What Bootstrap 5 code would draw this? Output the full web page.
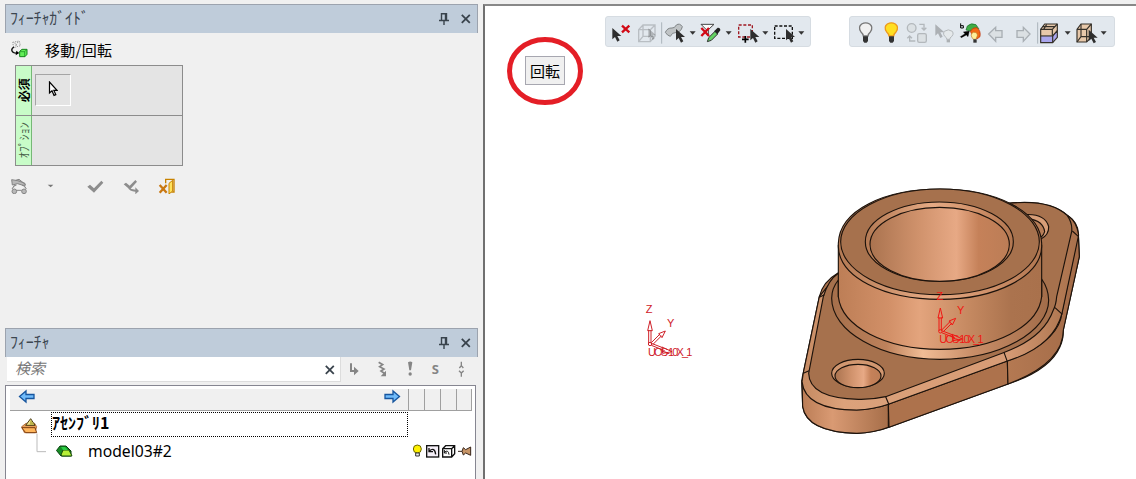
<!DOCTYPE html>
<html lang="ja">
<head>
<meta charset="utf-8">
<title>フィーチャガイド</title>
<link href="https://cdn.jsdelivr.net/npm/bootstrap@5.3.0/dist/css/bootstrap.min.css" rel="stylesheet">
<style>
body{width:1136px;height:479px;overflow:hidden;background:#f0f0f0;font-family:"Noto Sans","Noto Sans CJK JP",sans-serif;font-size:15px;line-height:1.2;color:#000}
.jp{font-family:"Noto Sans CJK JP",sans-serif}
svg{display:block;flex:none}
.side{width:483px;padding:4px 5px 0 5px}
.titlebar{width:473px;height:29px;background:#bfccda;border:1px solid #9ca3ae;border-bottom:0;font-size:16px;color:#3c4650;padding-left:4px;flex:none}
.titlebar span{margin-top:-3px;letter-spacing:-.15px}
.guide{height:295px;flex:none}
.guide-name{height:32px;padding:2px 0 0 5px}
.slots{width:168px;height:101px;margin-left:10px;border:1px solid #8c8c8c;background:#e4e4e4}
.slot{height:49px}
.slot+.slot{height:50px;border-top:1px solid #8c8c8c}
.slot-tag{width:16px;background:#c8fcc8;border-right:1px solid #76b876;flex:none}
.slot-tag span{transform:rotate(-90deg);white-space:nowrap;font-size:12px}
.pick{width:36px;height:32px;margin:8px 0 0 3px;border:1px solid #a5a5a5;border-right-color:#fff;border-bottom-color:#fff}
.search{width:334px;height:25px;background:#fff;padding:0 10px 3px 8px;margin-left:2px;color:#777;flex:none;border-right:1px solid #ddd;border-bottom:1px solid #ddd}
.tree{width:471px;height:94px;margin-top:3px;background:#fff;border:1px solid #868691;border-bottom:0;padding:3px 3px 0 4px}
.tree-head{height:22px;background:#f0f0f0;border-bottom:1px solid #a0a0a0}
.tree-head i{width:16px;border-left:1px solid #a0a0a0}
.tree-head i:last-child{border-right:1px solid #a0a0a0}
.node-name{width:357px;height:25px;border:1px dotted #000;font-size:16px;font-weight:bold;line-height:19px}
.view{margin-top:4px;height:475px;background:#fff;border-left:2px solid #707070;border-top:2px solid #888}
.tools{top:10px;height:31px;background:#e2e8ee;border:1px solid #d6dce2;border-radius:3px}
.hint{left:40px;top:50px;width:40px;height:29px;background:#f0f0f0;border:1px solid #a7a7b0}
</style>
</head>
<body class="d-flex">
<svg width="0" height="0" class="position-absolute"><defs>
<g id="pin" fill="none" stroke="#39434c" stroke-width="1.4"><path d="M2.500 7V.8h5V7M0 7.500h10M5 7.500V12M6.500 1v6"/></g>
<path id="x" d="M.8.8l8 8M8.800.8l-8 8" fill="none" stroke="#39434c" stroke-width="1.8"/>
<path id="caret" d="M0 0h18l-9 10z" fill="#333"/>
<path id="cur" d="M0 0V34l8-7 7 14 7-4-7-13h12z" fill="#2e2e2e"/>
<g id="axis" fill="none" stroke-width="3"><path d="M56 160V120M63 160V120M53 122l7-30 7 30zM64 158l26-26M69 163l26-26M86 131l20-8-10 20zM64 166l40 16M64 160l34 13M96 171l30 14-28 5z"/><circle cx="60" cy="162" r="5"/></g>
</defs></svg>

<aside class="side d-flex flex-column flex-shrink-0">
 <header class="titlebar jp d-flex align-items-center"><span class="me-auto">ﾌｨｰﾁｬｶﾞｲﾄﾞ</span>
  <svg width="10" height="13" style="margin-right:12px"><use href="#pin"/></svg><svg width="10" height="10" style="margin-right:6px"><use href="#x"/></svg></header>
 <section class="guide">
  <div class="guide-name jp d-flex align-items-center">
   <svg width="20" height="20" viewBox="30 120 60 60"><path d="M38 127l20-4 3 14-20 6zM44 128l6 12M54 126l-8 12" fill="none" stroke="#999" stroke-width="3" stroke-dasharray="4 3"/><path d="M42 141q-9 5-6 12t18 7" fill="none" stroke="#111" stroke-width="4"/><path d="M49 152l9 7-11 7z"/><path d="M59 154l7-6h15v15l-6 7H59z" fill="#62ef58" stroke="#15831c" stroke-width="3"/><path d="M60 155h14v14M74 155l6-6" fill="none" stroke="#15831c" stroke-width="2"/></svg>
   <span style="margin-left:15px;letter-spacing:.3px">移動/回転</span></div>
  <div class="slots">
   <div class="slot d-flex"><div class="slot-tag jp fw-bold d-flex align-items-center justify-content-center"><span>必須</span></div>
    <div class="pick d-flex"><svg width="10" height="16" style="margin:6px 0 0 12px" viewBox="0 0 10 16"><path d="M1.500 1v11l2.500-2.200 2 4.600 1.800-.8-2-4.300h3.200z" fill="#fff" stroke="#000" stroke-width="1.200"/></svg></div></div>
   <div class="slot d-flex"><div class="slot-tag jp d-flex align-items-center justify-content-center"><span style="color:#496149">ｵﾌﾟｼｮﾝ</span></div></div>
  </div>
  <svg width="180" height="20" viewBox="15 520 540 60" style="margin:8px 0 0 0">
   <g fill="#b8b8b8" stroke="#858585" stroke-width="3"><path d="M35 537l18 3 22 8v8l-22-7-16 4zM47 539l10-3 20 16"/><circle cx="43" cy="572" r="7"/><circle cx="72" cy="572" r="7"/><path d="M36 565l7-11h6M79 565l-7-11h-6M50 569h15"/></g>
   <path d="M143 552h17l-8 8z" fill="#777"/><path d="M262 558l8-6 12 11 22-23 6 6-28 30z" fill="#8d8d8d"/>
   <path d="M371 551l7-5 11 9 17-17 5 5-19 21 14 3v-7l11 11-11 10v-8q-18-2-22-11z" fill="#8d8d8d"/>
   <path d="M497 548v-12h25v38h-8" fill="none" stroke="#c88200" stroke-width="4"/><path d="M507 548l11-9v32l-11 9z" fill="#ffe25b" stroke="#c88200" stroke-width="3"/><path d="M479 553l21 23M500 553l-21 23" stroke="#c97812" stroke-width="7"/>
  </svg>
 </section>
 <header class="titlebar jp d-flex align-items-center"><span class="me-auto">ﾌｨｰﾁｬ</span>
  <svg width="10" height="13" style="margin-right:12px"><use href="#pin"/></svg><svg width="10" height="10" style="margin-right:6px"><use href="#x"/></svg></header>
 <div class="d-flex">
  <div class="search jp d-flex align-items-center"><em class="me-auto">検索</em><svg width="10" height="10" class="mt-1" style="margin-right:-5px"><use href="#x"/></svg></div>
  <svg width="129" height="25" viewBox="303 113 387 75"><g fill="none" stroke="#858585" stroke-width="6"><path d="M333 132v23h14"/><path d="M416 129l12 7-9 6 13 7-9 6 13 9" stroke-width="5"/></g><path d="M342 142l14 13-14 13zM422 171h16v-17zM504 129q7-5 13 0l-4 24h-5z" fill="#858585"/><circle cx="510.500" cy="164" r="5" fill="#858585"/><text x="575" y="164" font-family="Noto Sans" font-weight="bold" font-size="39" fill="#858585">S</text><path d="M664 127v12l-6 7M664 139l6 7M657 154l7 7 7-7M664 160v12" stroke="#858585" stroke-width="4" fill="none"/></svg>
 </div>
 <div class="tree flex-shrink-0">
  <div class="tree-head d-flex">
   <svg width="18" height="15" viewBox="0 0 18 15" style="margin-left:8px"><path d="M1.500 7.500L8 2v3.500h8v4H8V13z" fill="#70bbfa" stroke="#16559e" stroke-width="1.300"/></svg>
   <svg width="18" height="15" viewBox="0 0 18 15" class="ms-auto" style="margin-right:7px"><path d="M16.500 7.500L10 2v3.500H2v4h8V13z" fill="#70bbfa" stroke="#16559e" stroke-width="1.300"/></svg>
   <i></i><i></i><i></i><i></i>
  </div>
  <div class="d-flex" style="padding-top:1px">
   <svg width="41" height="68" viewBox="30 275 123 204" style="margin-right:0"><path d="M111 340v54h27" fill="none" stroke="#bbb" stroke-width="3"/><path d="M65 319l13-10h26l6 10-5 18H73z" fill="#e9a05a" stroke="#934713" stroke-width="2"/><path d="M65 322h40l5 15H77z" fill="#ffb65c" stroke="#7c3d10" stroke-width="3"/><path d="M92 295l13 20H77z" fill="#f0e58d" stroke="#493a14" stroke-width="3"/><path d="M92 298l-3 15h14z" fill="#bcb448"/></svg>
   <div class="flex-grow-1">
    <div class="node-name jp">ｱｾﾝﾌﾞﾘ1</div>
    <div class="d-flex align-items-center" style="height:28px;padding-left:5px">
     <svg width="17" height="12" viewBox="0 0 17 12"><path d="M.5 5.500L4 1h6l5 5v5H5z" fill="#168b25" stroke="#063f0d"/><path d="M5 10l2-5h6l3 6H6z" fill="#b7ef38" stroke="#174d0c"/><path d="M5 2h4l3 3H7z" fill="#2bce43"/></svg>
     <span class="me-auto" style="margin-left:15px;font-size:15.700px">model03#2</span>
     <svg width="62" height="16" viewBox="510 370 186 48" style="margin-right:0"><circle cx="532" cy="388" r="12" fill="#fff100" stroke="#6e6800" stroke-width="3"/><path d="M527 400h11v9h-11z" fill="#eee" stroke="#333" stroke-width="3"/><rect x="560" y="378" width="36" height="34" fill="#f5eff8" stroke="#111" stroke-width="4"/><path d="M568 394q16-13 19 10M567 385v11h12M608 387l9-9h27v24l-9 10h-27zM608 387h27v25M635 387l9-9" fill="none" stroke="#111" stroke-width="4"/><path d="M613 398q12-10 14 7M613 391v9h8" fill="none" stroke="#111" stroke-width="3"/><path d="M654 395h12l4-11 7 6 15-8v25l-15-7-7 6-4-11" fill="#c79567" stroke="#362419" stroke-width="3"/></svg>
    </div>
   </div>
  </div>
 </div>
</aside>

<main class="view flex-grow-1 position-relative">
 <svg class="position-absolute" style="left:22px;top:28px" width="80" height="74" viewBox="0 0 80 74"><ellipse cx="38" cy="37" rx="35.500" ry="31.500" fill="none" stroke="#e41e26" stroke-width="5"/></svg>
 <div class="hint jp position-absolute d-flex align-items-center justify-content-center">回転</div>

 <div class="tools position-absolute d-flex align-items-center" style="left:120px;width:206px">
  <svg width="204" height="29" viewBox="18 21 612 87">
   <use href="#cur" transform="translate(37 54)"/><path d="M66 47l22 20M88 47l-22 20" stroke="#d20a16" stroke-width="7"/>
   <g fill="none" stroke="#b9bec3" stroke-width="4"><path d="M116 59l13-14h36v34l-14 16h-35zM116 59h35v36M151 59l14-14M129 45v34h36M129 79l-13 16"/></g><use href="#cur" transform="translate(145 55) scale(.85)" opacity=".28"/>
   <path d="M185 37v64" stroke="#aab3bb" stroke-width="3"/>
   <path d="M196 67q6-14 20-13 8 1 13-9 10-7 18 5-4 16-17 17-15 0-19 12-9-2-15-12z" fill="#bfc3c5" stroke="#808587" stroke-width="3"/><use href="#cur" transform="translate(228 57)"/>
   <path d="M303 43h39l-17 16v18l-6-5V59z" fill="#fafafa" stroke="#444" stroke-width="3"/><path d="M304 54l23 24M327 54l-23 24" stroke="#d20a16" stroke-width="7"/><path d="M322 95l4-12 19-19 8 8-19 19z" fill="#63d363" stroke="#333" stroke-width="3"/><path d="M343 63l10-10q8-1 8 8l-9 12z" fill="#222"/>
   <rect x="416" y="45" width="41" height="36" fill="none" stroke="#a01822" stroke-width="4" stroke-dasharray="9 5"/><path d="M436 78v20M426 88h20" stroke="#000" stroke-width="5"/><use href="#cur" transform="translate(451 57)" style="fill:#000"/>
   <rect x="524" y="48" width="53" height="37" fill="none" stroke="#111" stroke-width="4" stroke-dasharray="9 5"/><use href="#cur" transform="translate(558 57)"/>
   <use href="#caret" x="269" y="64"/><use href="#caret" x="377" y="64"/><use href="#caret" x="487" y="64"/><use href="#caret" x="595" y="64"/>
  </svg></div>

 <div class="tools position-absolute d-flex align-items-center" style="left:364px;width:266px">
  <svg width="264" height="29" viewBox="30 21 792 87">
   <path d="M70 78q-1-7-7-12-10-15 2-24 12-7 24 0 12 9 2 24-6 5-7 12z" fill="#f1f1f1" stroke="#777" stroke-width="4"/><path d="M69 79h15v14l-4 5h-7l-4-5z" fill="#333"/>
   <path d="M147 78q-1-7-7-12-10-15 2-24 12-7 24 0 12 9 2 24-6 5-7 12z" fill="#ffdf22" stroke="#ed991c" stroke-width="4"/><path d="M147 79h15v14l-4 5h-7l-4-5z" fill="#333"/>
   <g fill="#dce1e4" stroke="#b3b8bc" stroke-width="4"><circle cx="215" cy="54" r="13"/><rect x="233" y="71" width="26" height="26" rx="5"/><path d="M238 43h14v15M245 53l7 7 7-7M226 93h-17V78M202 85l7-7 7 7" fill="none"/></g>
   <use href="#cur" transform="translate(286 43)" opacity=".3"/><path d="M320 88v-4q-14-10-7-20 12-9 24 0 7 10-7 20v4z" fill="#e5e9eb" stroke="#b5b9bc" stroke-width="3"/><path d="M320 89h10v8h-10z" fill="#acb0b3"/>
   <path d="M382 48q11-11 26-4l8 12-9 10-29-6z" fill="#3fac45" stroke="#146c26" stroke-width="2"/><path d="M391 64q7-13 20-11 12 9 9 27l-9 7-15-13z" fill="#f26b14" stroke="#b92b08" stroke-width="2"/><path d="M400 88q-13-15 0-21 13-1 12 10l-4 11z" fill="#fff099" stroke="#bd7d25" stroke-width="2"/><path d="M400 88h10v10h-10z" fill="#333"/><path d="M362 40v14h8v-7h-8" fill="none" stroke="#000" stroke-width="3"/><path d="M361 80l14-9-5-5 18-3-4 17-5-5-15 8z" stroke="#000" stroke-width="1"/>
   <path d="M446 72l21-20v10h19v20h-19v12zM570 72l-20-20v10h-19v20h19v12z" fill="#dbe0e3" stroke="#a9afb4" stroke-width="4"/>
   <path d="M593 37v64" stroke="#aab3bb" stroke-width="3"/>
   <g stroke="#353029" stroke-width="3.500" stroke-linejoin="round"><path d="M602 58l12-16h38v20l-13 17h-37z" fill="#e7c8aa"/><path d="M602 58h35l15-16M637 58v19M608 50h36M620 43l-9 15" fill="none"/><path d="M602 78h36l14-16v20l-14 16h-36z" fill="#aaa6ed"/><path d="M638 78v20"/></g>
   <g stroke="#353029" stroke-width="3.500"><path d="M711 58l12-16h31v40l-14 14h-29z" fill="#e7c8aa"/><path d="M711 58h29v38M740 58l14-16M723 42v38h31M723 80l-12 16" fill="none"/></g><use href="#cur" transform="translate(746 59)" style="fill:#000"/>
   <use href="#caret" x="674" y="64"/><use href="#caret" x="782" y="64"/>
  </svg></div>

 <svg class="position-absolute" style="left:145px;top:284px" width="100" height="80" viewBox="0 0 300 240"><use href="#axis" stroke="#cf2028"/><g fill="#cf2028" font-family="Liberation Sans" font-size="33"><text x="47" y="68">Z</text><text x="111" y="111">Y</text><text x="54" y="197" textLength="133" lengthAdjust="spacing">UOS-10X_1</text></g></svg>

 <svg class="position-absolute" style="left:305px;top:174px" width="300" height="260" viewBox="0 0 900 780">
  <defs>
   <linearGradient id="wall"><stop stop-color="#bd7e56"/><stop offset=".25" stop-color="#d29068"/><stop offset=".4" stop-color="#e3a47d"/><stop offset=".65" stop-color="#c48860"/><stop offset=".85" stop-color="#ab734e"/><stop offset="1" stop-color="#a9714c"/></linearGradient>
   <linearGradient id="bore"><stop stop-color="#aa734f"/><stop offset=".35" stop-color="#d0926c"/><stop offset=".62" stop-color="#e7a985"/><stop offset=".78" stop-color="#c58159"/><stop offset="1" stop-color="#bc7d56"/></linearGradient>
   <linearGradient id="rim"><stop stop-color="#b47a54"/><stop offset=".45" stop-color="#e5aa84"/><stop offset=".75" stop-color="#cf9069"/><stop offset="1" stop-color="#b17650"/></linearGradient>
   <linearGradient id="foot" gradientUnits="userSpaceOnUse" x1="36" x2="297" y1="0" y2="0"><stop stop-color="#bb7d56"/><stop offset=".35" stop-color="#d99a73"/><stop offset="1" stop-color="#a66e49"/></linearGradient>
   <linearGradient id="end" gradientUnits="userSpaceOnUse" x1="654" x2="868" y1="0" y2="0"><stop stop-color="#b47952"/><stop offset="1" stop-color="#a36b48"/></linearGradient>
   <linearGradient id="bevel" gradientUnits="userSpaceOnUse" x1="36" x2="868" y1="0" y2="0"><stop stop-color="#c58a62"/><stop offset=".15" stop-color="#dca27b"/><stop offset=".74" stop-color="#d69b75"/><stop offset=".93" stop-color="#b27953"/><stop offset="1" stop-color="#a8704c"/></linearGradient>
   <linearGradient id="fillet"><stop stop-color="#a56f4b"/><stop offset=".25" stop-color="#bd815b"/><stop offset=".42" stop-color="#f0bc95"/><stop offset=".65" stop-color="#c98e68"/><stop offset="1" stop-color="#a26c49"/></linearGradient>
  </defs>
  <g stroke="#1c120b" stroke-width="3.400" stroke-linejoin="round">
   <path d="M145 278Q98 305 88 350L40 578Q34 595 36 625L38 680Q50 756 200 760Q252 759 297 742L654 612Q780 570 810 500Q820 480 820 450L868 230L865 160Q864 128 835 108Q780 57 655 70L500 200Z" fill="#ad734e"/>
   <path d="M36 600Q50 690 200 690Q250 689 295 673V742Q252 759 200 760Q50 756 38 680Z" fill="url(#foot)"/>
   <path d="M295 673L652 543L654 612L297 742Z" fill="#ad724c"/>
   <path d="M652 543Q810 485 816 395L865 160L868 230L820 450Q820 550 654 612Z" fill="url(#end)"/>
   <path d="M36 605Q45 690 200 690Q250 689 295 673L652 543Q790 500 816 400L866 165Q860 125 835 108L800 190L120 310L88 350L40 578Z" fill="url(#bevel)"/>
   <path d="M145 280Q115 300 100 350L56 580Q58 655 205 658Q248 659 287 650L640 518Q760 475 790 390Q798 375 800 350L845 155Q848 130 832 107Q780 57 655 70L400 180Z" fill="#a6714d"/>
   <path d="M88 352l15-8M40 580l17-8M287 650l10 24M642 517l10 28M795 383l22 20M847 153l18 16" fill="none"/>
   <path d="M704 104Q765 100 776 140Q777 164 753 177L735 155Z" fill="#d89e78"/><path d="M716 116Q760 123 764 155Q761 166 754 171L735 145Z" fill="#b87e58"/>
   <ellipse cx="204" cy="580" rx="79" ry="42" fill="#d19770"/><ellipse cx="204" cy="588" rx="69" ry="35" fill="url(#bore)"/>
   <path d="M145 300Q125 325 125 355C125 455 270 538 450 538S776 455 776 360Q775 325 755 297V350H145Z" fill="url(#fillet)"/>
   <path d="M145 195V350C155 440 286 508 450 508S745 440 755 350V195Z" fill="url(#wall)"/>
   <path d="M145 190C148 90 284 27 450 27S752 92 755 190V200C752 289 619 358 450 358S148 292 145 200Z" fill="url(#rim)"/>
   <ellipse cx="450" cy="185.500" rx="298" ry="158.500" fill="#a6714d"/>
   <ellipse cx="448" cy="185" rx="222" ry="119" fill="url(#rim)"/><ellipse cx="449" cy="193" rx="209" ry="111" fill="url(#bore)"/>
  </g>
  <g transform="translate(391 292)"><use href="#axis" stroke="#f01713"/><g fill="#f01713" font-family="Liberation Sans" font-size="33"><text x="48" y="67">Z</text><text x="110" y="111">Y</text><text x="57" y="197" textLength="133" lengthAdjust="spacing">UOS-10X_1</text></g></g>
 </svg>
</main>
<script src="https://cdn.jsdelivr.net/npm/bootstrap@5.3.0/dist/js/bootstrap.bundle.min.js"></script>
</body>
</html>
